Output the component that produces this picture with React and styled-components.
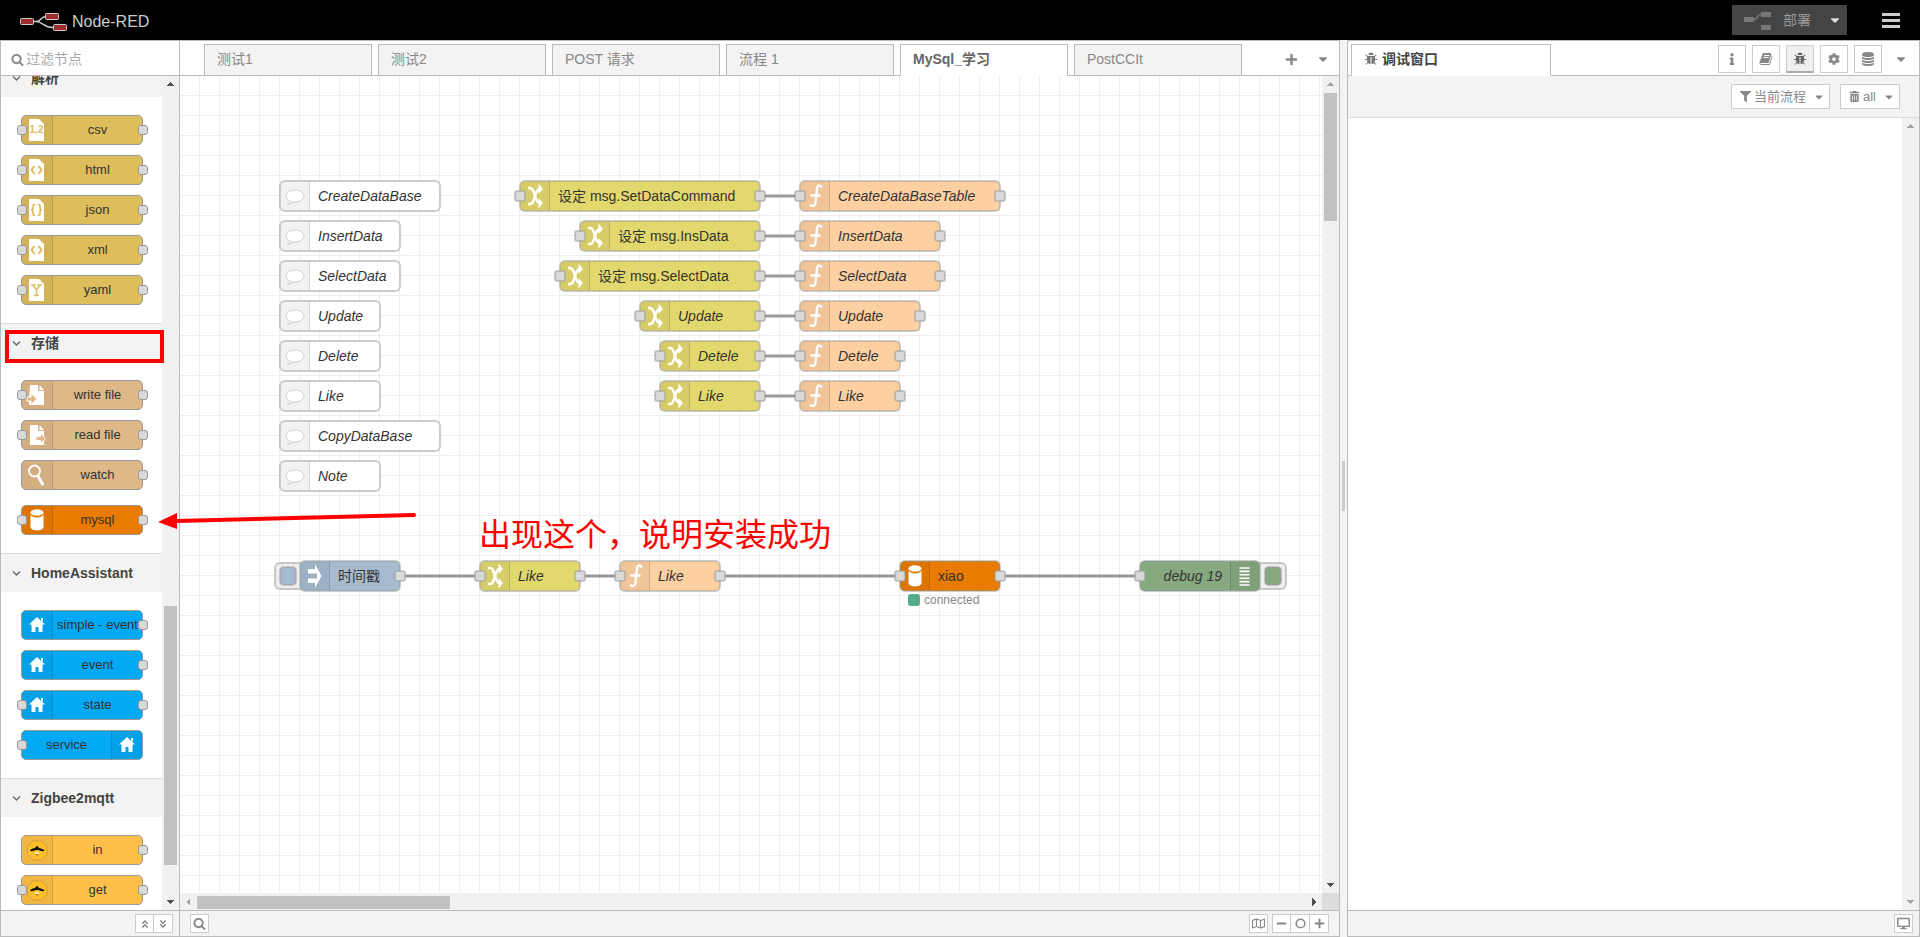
import React from "react";
import styled, { createGlobalStyle, css } from "styled-components";
import {
  FaInfo, FaCog, FaFilter, FaTrashAlt, FaRegMap, FaMinus, FaPlus, FaDesktop,
  FaCaretDown, FaAngleDoubleUp, FaAngleDoubleDown,
} from "react-icons/fa";

const Global = createGlobalStyle`
  *, *::before, *::after { box-sizing: border-box; }
  body {
    margin: 0;
    background: #f3f3f3;
    color: #333;
    font-family: "Liberation Sans", "Noto Sans CJK SC", sans-serif;
    font-size: 14px;
    line-height: 20px;
  }
  button, input { font: inherit; }
`;

/* ---------- icons ---------- */

const fa4 = {
  search: "M1216 832q0-185-131.5-316.5t-316.5-131.5-316.5 131.5-131.5 316.5 131.5 316.5 316.5 131.5 316.5-131.5 131.5-316.5zm512 832q0 52-38 90t-90 38q-54 0-90-38l-343-342q-179 124-399 124-143 0-273.5-55.5t-225-150-150-225-55.5-273.5 55.5-273.5 150-225 225-150 273.5-55.5 273.5 55.5 225 150 150 225 55.5 273.5q0 220-124 399l343 343q37 37 37 90z",
  database: "M896 768q237 0 443-43t325-127v170q0 69-103 128t-280 93.5-385 34.5-385-34.5-280-93.5-103-128v-170q119 84 325 127t443 43zm0 768q237 0 443-43t325-127v170q0 69-103 128t-280 93.5-385 34.5-385-34.5-280-93.5-103-128v-170q119 84 325 127t443 43zm0-384q237 0 443-43t325-127v170q0 69-103 128t-280 93.5-385 34.5-385-34.5-280-93.5-103-128v-170q119 84 325 127t443 43zm0-1152q208 0 385 34.5t280 93.5 103 128v128q0 69-103 128t-280 93.5-385 34.5-385-34.5-280-93.5-103-128v-128q0-69 103-128t280-93.5 385-34.5z",
  bug: "M1696 960q0 26-19 45t-45 19h-224q0 171-67 290l208 209q19 19 19 45t-19 45q-18 19-45 19t-45-19l-198-197q-5 5-15 13t-42 28.5-65 36.5-82 29-97 13v-896h-128v896q-51 0-101.5-13.5t-87-33-66-39-43.5-32.5l-15-14-183 207q-20 21-48 21-24 0-43-16-19-18-20.5-44.5t15.5-46.5l202-227q-58-114-58-274h-224q-26 0-45-19t-19-45 19-45 45-19h224v-294l-173-173q-19-19-19-45t19-45 45-19 45 19l173 173h844l173-173q19-19 45-19t45 19 19 45-19 45l-173 173v294h224q26 0 45 19t19 45zm-480-576h-640q0-133 93.5-226.5t226.5-93.5 226.5 93.5 93.5 226.5z",
  book: "M1703 478q40 57 18 129l-275 906q-19 64-76.5 107.5t-122.5 43.5h-923q-77 0-148.5-53.5t-99.5-131.5q-24-67-2-127 0-4 3-27t4-37q1-8-3-21.5t-3-19.5q2-11 8-21t16.5-23.5 16.5-23.5q23-38 45-91.5t30-91.5q3-10 .5-30t-.5-28q3-11 17-28t17-23q21-36 42-92t25-90q1-9-2.5-32t.5-28q4-13 22-30.5t22-22.5q19-26 42.5-84.5t27.5-96.5q1-8-3-25.5t-2-26.5q2-8 9-18t18-23 17-21q8-12 16.5-30.5t15-35 16-36 19.5-32 26.5-23.5 36-11.5 47.5 5.5l-1 3q38-9 51-9h761q74 0 114 56t18 130l-274 906q-36 119-71.5 153.5t-128.5 34.5h-869q-27 0-38 15-11 16-1 43 24 70 144 70h923q29 0 56-15.5t35-41.5l300-987q7-22 5-57 38 15 59 43zm-1064 2q-4 13 2 22.5t20 9.5h608q13 0 25.5-9.5t16.5-22.5l21-64q4-13-2-22.5t-20-9.5h-608q-13 0-25.5 9.5t-16.5 22.5zm-83 256q-4 13 2 22.5t20 9.5h608q13 0 25.5-9.5t16.5-22.5l21-64q4-13-2-22.5t-20-9.5h-608q-13 0-25.5 9.5t-16.5 22.5z",
};

const Glyph = ({ name, size = 14 }) => (
  <svg width={size} height={size} viewBox="0 0 1792 1792" fill="currentColor" aria-hidden="true">
    <path d={fa4[name]} />
  </svg>
);

const Chevron = () => (
  <svg width="14" height="14" viewBox="0 0 14 14" aria-hidden="true">
    <path d="M4 5.500l3.500 3.500L11 5.500" fill="none" stroke="#666" strokeWidth="1.300" />
  </svg>
);

const filePath = "M7 3h10l5 5v17H7z";

const nodeIcons = {
  csv: (c) => (
    <>
      <path d={filePath} fill="#fff" />
      <text x="14.5" y="17" fontSize="10" fontWeight="bold" textAnchor="middle" fill={c}>1,2</text>
    </>
  ),
  html: (c) => (
    <>
      <path d={filePath} fill="#fff" />
      <path d="M12.500 10l-3 4 3 4M16.500 10l3 4-3 4" fill="none" stroke={c} strokeWidth="2" />
    </>
  ),
  json: (c) => (
    <>
      <path d={filePath} fill="#fff" />
      <path d="M13.500 8.500h-1q-1.500 0-1.500 1.500v2q0 2-2 2q2 0 2 2v2q0 1.500 1.500 1.500h1M15.500 8.500h1q1.500 0 1.500 1.500v2q0 2 2 2q-2 0-2 2v2q0 1.500-1.500 1.500h-1" fill="none" stroke={c} strokeWidth="1.700" />
    </>
  ),
  yaml: (c) => (
    <>
      <path d={filePath} fill="#fff" />
      <path d="M9 9h4.500M15.500 9H20M11 9l3.500 5L18 9M14.500 14v5.500M12 19.500h5" fill="none" stroke={c} strokeWidth="1.500" />
    </>
  ),
  write: (c) => (
    <>
      <path d="M8 4h8v6h6v14H7v-4z" fill="#fff" />
      <path d="M17.500 4l4.500 5h-4.500z" fill="#fff" />
      <path d="M5 16h4v-3.500l6 5.500-6 5.500V20H5z" fill={c} stroke="#fff" strokeWidth="1" />
    </>
  ),
  read: (c) => (
    <>
      <path d="M8 4h8v6h6v14H8z" fill="#fff" />
      <path d="M17.500 4l4.500 5h-4.500z" fill="#fff" />
      <path d="M14 15.500h4.500V12l5 5.500-5 5.500v-3.500H14z" fill={c} stroke="#fff" strokeWidth="1" />
    </>
  ),
  watch: () => (
    <>
      <circle cx="12.500" cy="10" r="5.500" fill="none" stroke="#fff" strokeWidth="1.800" />
      <path d="M16 15l4.500 8" stroke="#fff" strokeWidth="3" strokeLinecap="round" />
    </>
  ),
  db: (c) => (
    <>
      <path d="M8.500 7.500v14.500c0 4.500 13 4.500 13 0V7.500z" fill="#fff" />
      <ellipse cx="15" cy="8.500" rx="7" ry="4" fill={c} />
      <ellipse cx="15" cy="7.500" rx="6.500" ry="3.200" fill="#fff" />
    </>
  ),
  home: () => (
    <path d="M15 6l8 7.500h-2.500V21h-4v-5h-3v5h-4v-7.500H7z M19 7h2v4l-2-2z" fill="#fff" />
  ),
  bee: () => (
    <>
      <path d="M11 5h8.500l5.500 5.500v8L19.500 24H11l-5.500-5.500v-8z" fill="#ffbf2b" stroke="#cf9d3c" strokeWidth="1" />
      <path d="M8 15q0-2 5-3l1.500-2h1l1.500 2q5 1 5.500 3-4 .5-6-1h-2.500q-3 1.500-6 1z" fill="#111" />
      <path d="M13 16h4l-.5 2h-3z" fill="#fff3c0" />
      <path d="M13.500 18h3L15 20.500z" fill="#a87d20" />
    </>
  ),
  change: () => (
    <>
      <path d="M8 7h2.500c4.500 0 4 15 9 15M8 23h2.500c4.500 0 4-15 9-15" fill="none" stroke="#fff" strokeWidth="2.600" />
      <path d="M18.500 2.500l4.500 5.500-4.500 5zM18.500 17l4.500 5-4.500 5.500z" fill="#fff" />
    </>
  ),
  fn: () => (
    <path d="M22 6.500c-1.500-3-4.500-3-5 1L15.500 21.500c-.5 4-3.500 4.500-5.500 2M10.500 14.500h10" fill="none" stroke="#fff" strokeWidth="2.300" />
  ),
  inject: () => (
    <path d="M8 8h7V3l6.500 12L15 27v-5H8v-4.500h9v-5H8z" fill="#fff" />
  ),
  debug: () => (
    <path d="M9.500 7h10M9.500 10.400h10M9.500 13.800h10M9.500 17.200h10M9.500 20.600h10M9.500 24h10" stroke="#fff" strokeWidth="1.600" />
  ),
  comment: () => (
    <path d="M11 20.500c-2.500-1-5-2.500-5-5.500 0-8 18-8 18 0 0 4-5 6.500-11 6-1.500 1-3.500 2.500-5.500 3 1.500-1 3-2 3.500-3.500z" fill="#fff" stroke="#ccc" strokeWidth="1" />
  ),
};

/* ---------- header ---------- */

const Page = styled.div`
  position: relative;
  display: flex;
  flex-direction: column;
  height: 100vh;
  min-width: 1100px;
  overflow: hidden;
`;

const Header = styled.header`
  display: flex;
  align-items: center;
  flex: none;
  height: 40px;
  padding: 0 20px;
  background: #000;
`;

const Brand = styled.h1`
  display: flex;
  align-items: center;
  gap: 4px;
  margin: 0 auto 0 0;
  padding-top: 3px;
  color: #ccc;
  font-size: 16px;
  font-weight: normal;
`;

const Deploy = styled.div`
  display: flex;
  height: 30px;
  margin: 0 35px 0 0;
  background: #444;
`;

const DeployButton = styled.button`
  display: flex;
  align-items: center;
  gap: 12px;
  padding: 0 9px 0 12px;
  border: 0;
  background: none;
  color: #999;
`;

const DeployCaret = styled.button`
  display: flex;
  align-items: center;
  justify-content: center;
  width: 27px;
  padding: 0 0 0 2px;
  border: 0;
  background: none;
  color: #ddd;
`;

const MenuButton = styled.button`
  display: flex;
  flex-direction: column;
  gap: 3px;
  width: 18px;
  padding: 0;
  border: 0;
  background: none;
`;

const MenuBar = styled.span`
  height: 3px;
  background: #ccc;
`;

/* ---------- shared panel parts ---------- */

const Main = styled.main`
  display: flex;
  flex: 1;
  min-height: 0;
`;

const Panel = styled.section`
  display: flex;
  flex-direction: column;
  min-width: 0;
  border: 1px solid #bbb;
  background: #fff;
`;

const Palette = styled(Panel)`
  flex: none;
  width: 180px;
`;

const Workspace = styled(Panel)`
  flex: 1;
  border-left: 0;
`;

const Sidebar = styled(Panel)`
  flex: none;
  width: 573px;
`;

const Separator = styled.div`
  display: flex;
  align-items: center;
  justify-content: center;
  flex: none;
  width: 7px;
  padding-bottom: 6px;
`;

const Grip = styled.span`
  width: 3px;
  height: 50px;
  background: #ccc;
`;

const Body = styled.div`
  display: flex;
  flex: 1;
  min-height: 0;
`;

const Footer = styled.footer`
  display: flex;
  align-items: center;
  justify-content: ${(p) => p.$align || "flex-end"};
  flex: none;
  height: 26px;
  padding: ${(p) => p.$pad};
  border-top: 1px solid #bbb;
  background: #f3f3f3;
`;

const FooterGroup = styled.div`
  display: flex;
  margin-left: ${(p) => p.$gap || 0}px;
`;

const FooterButton = styled.button`
  display: flex;
  align-items: center;
  justify-content: center;
  width: 19px;
  height: 19px;
  padding: 0;
  border: 1px solid #ccc;
  background: #fff;
  color: #888;
  & + & { border-left: 0; }
`;

const Bar = styled.div`
  display: flex;
  flex: none;
  flex-direction: ${(p) => (p.$across ? "row" : "column")};
  ${(p) => (p.$across ? "height" : "width")}: 17px;
  background: #f1f1f1;
`;

const BarArrow = styled.span`
  display: flex;
  align-items: center;
  justify-content: center;
  flex: none;
  width: 17px;
  height: 17px;
  color: ${(p) => (p.$off ? "#a3a3a3" : "#505050")};
`;

const Room = styled.span`
  flex: ${(p) => p.$size} 0 0;
`;

const Thumb = styled.span`
  flex: ${(p) => p.$size} 0 0;
  margin: ${(p) => (p.$across ? "3px 0 1px" : "0 2px")};
  background: #c1c1c1;
`;

const Corner = styled.span`
  flex: none;
  width: 17px;
  height: 17px;
  background: #dcdcdc;
`;

const arrows = {
  up: "M0 6l4-4 4 4z",
  down: "M0 3l4 4 4-4z",
  left: "M6 1L2 5l4 4z",
  right: "M3 1l4 4-4 4z",
};

const Arrow = ({ dir, off }) => (
  <BarArrow $off={off}>
    <svg width="9" height="9" viewBox="0 0 9 9" fill="currentColor" shapeRendering="crispEdges"><path d={arrows[dir]} /></svg>
  </BarArrow>
);

const ScrollBar = ({ across, parts, startOff, endOff }) => (
  <Bar $across={across}>
    <Arrow dir={across ? "left" : "up"} off={startOff} />
    <Room $size={parts[0]} />
    {parts[1] > 0 && <Thumb $size={parts[1]} $across={across} />}
    <Room $size={parts[2]} />
    <Arrow dir={across ? "right" : "down"} off={endOff} />
  </Bar>
);

/* ---------- palette ---------- */

const Search = styled.label`
  display: flex;
  align-items: center;
  gap: 2px;
  flex: none;
  height: 35px;
  padding: 2px 10px 0;
  border-bottom: 1px solid #bbb;
  color: #888;
`;

const SearchInput = styled.input`
  flex: 1;
  min-width: 0;
  padding: 0;
  border: 0;
  outline: 0;
  background: none;
  color: #333;
  &::placeholder { color: #aaa; opacity: 1; }
`;

const Categories = styled.div`
  flex: 1;
  min-width: 0;
  overflow: hidden;
`;

const CategoryList = styled.div`
  margin-top: -18px;
`;

const CategoryHeader = styled.h2`
  display: flex;
  align-items: center;
  gap: 8px;
  height: 39px;
  margin: 0;
  padding: 0 8px;
  border-top: 1px solid #ddd;
  background: #f3f3f3;
  font-size: 14px;
  color: #444;
`;

const CategoryNodes = styled.div`
  display: flex;
  flex-direction: column;
  gap: 10px;
  padding: 18px 19px 18px 20px;
`;

const PaletteNode = styled.div`
  position: relative;
  display: flex;
  flex-direction: ${(p) => (p.$flip ? "row-reverse" : "row")};
  height: 30px;
  margin-top: ${(p) => (p.$spaced ? 5 : 0)}px;
  border: 1px solid #999;
  border-radius: 5px;
  background: ${(p) => p.$color};
  font-size: 13px;
`;

const IconCell = styled.span`
  flex: none;
  width: ${(p) => p.$w || 31}px;
  border: 0 solid rgba(0, 0, 0, 0.12);
  border-${(p) => (p.$flip ? "left" : "right")}-width: 1px;
  border-radius: ${(p) => (p.$flip ? "0 4px 4px 0" : "4px 0 0 4px")};
  background: rgba(0, 0, 0, 0.05);
  overflow: hidden;
`;

const PaletteLabel = styled.span`
  flex: 1;
  line-height: 28px;
  text-align: center;
  white-space: nowrap;
`;

const PalettePort = styled.span`
  position: absolute;
  top: 9px;
  ${(p) => (p.$side === "left" ? "left: -5px" : "right: -6px")};
  width: 10px;
  height: 10px;
  border: 1px solid #999;
  border-radius: 3px;
  background: #d9d9d9;
`;

const gold = "#DEBD5C";
const tan = "#DEB887";
const orange = "#E97B00";
const blue = "#03A9F4";
const amber = "#FFC049";

const categories = [
  { name: "解析", nodes: [
    { label: "csv", icon: "csv", color: gold, in: 1, out: 1 },
    { label: "html", icon: "html", color: gold, in: 1, out: 1 },
    { label: "json", icon: "json", color: gold, in: 1, out: 1 },
    { label: "xml", icon: "html", color: gold, in: 1, out: 1 },
    { label: "yaml", icon: "yaml", color: gold, in: 1, out: 1 },
  ] },
  { name: "存储", nodes: [
    { label: "write file", icon: "write", color: tan, in: 1, out: 1 },
    { label: "read file", icon: "read", color: tan, in: 1, out: 1 },
    { label: "watch", icon: "watch", color: tan, out: 1 },
    { label: "mysql", icon: "db", color: orange, in: 1, out: 1, spaced: true },
  ] },
  { name: "HomeAssistant", nodes: [
    { label: "simple - event", icon: "home", color: blue, out: 1 },
    { label: "event", icon: "home", color: blue, out: 1 },
    { label: "state", icon: "home", color: blue, in: 1, out: 1 },
    { label: "service", icon: "home", color: blue, in: 1, flip: true },
  ] },
  { name: "Zigbee2mqtt", nodes: [
    { label: "in", icon: "bee", color: amber, out: 1 },
    { label: "get", icon: "bee", color: amber, in: 1, out: 1 },
  ] },
];

/* ---------- tabs ---------- */

const TabBar = styled.div`
  display: flex;
  align-items: flex-end;
  gap: ${(p) => p.$gap || 0}px;
  flex: none;
  height: 35px;
  padding: ${(p) => p.$pad};
  box-shadow: inset 0 -1px #bbb;
`;

const Tab = styled.a`
  display: flex;
  align-items: center;
  gap: 4px;
  flex: 0 1 ${(p) => p.$w || 168}px;
  min-width: 0;
  height: 32px;
  padding: 0 12px 2px;
  border: 1px solid #bbb;
  border-bottom-color: ${(p) => (p.$active ? "#fff" : "#bbb")};
  background: ${(p) => (p.$active ? "#fff" : "#f3f3f3")};
  color: ${(p) => p.$tone || (p.$active ? "#666" : "#888")};
  font-weight: ${(p) => (p.$active ? "bold" : "normal")};
  text-decoration: none;
  white-space: nowrap;
  svg { color: #777; }
`;

const TabTools = styled.div`
  display: flex;
  align-items: center;
  gap: 6px;
  height: 34px;
  margin-left: auto;
`;

const PlainButton = styled.button`
  display: flex;
  align-items: center;
  justify-content: center;
  width: 26px;
  height: 28px;
  padding: 0;
  border: 0;
  background: none;
  color: #888;
`;

const SideButton = styled.button`
  display: flex;
  align-items: center;
  justify-content: center;
  width: 28px;
  height: 28px;
  padding: 0;
  border: 1px solid #ccc;
  background: #fff;
  color: #888;
  ${(p) => p.$on && css`
    border-bottom: 2px solid #aaa;
    background: #efefef;
    color: #666;
  `}
`;

/* ---------- canvas ---------- */

const CanvasColumn = styled.div`
  display: flex;
  flex-direction: column;
  flex: 1;
  min-width: 0;
`;

const Canvas = styled.div`
  position: relative;
  flex: 1;
  overflow: hidden;
  background-color: #fff;
  background-image:
    linear-gradient(to right, transparent 19px, #eee 19px),
    linear-gradient(to bottom, transparent 19px, #eee 19px);
  background-size: 20px 20px;
`;

const Wires = styled.svg`
  position: absolute;
  inset: 0;
  width: 100%;
  height: 100%;
`;

const softEdge = css`
  border: 1px solid rgba(153, 153, 153, 0.5);
  box-shadow: 0 0 0 1px rgba(153, 153, 153, 0.5);
`;

const FlowNode = styled.div`
  position: absolute;
  left: ${(p) => p.$x}px;
  top: ${(p) => p.$y}px;
  width: ${(p) => p.$w}px;
  height: 30px;
`;

const FlowBody = styled.div`
  ${softEdge}
  position: relative;
  display: flex;
  flex-direction: ${(p) => (p.$flip ? "row-reverse" : "row")};
  height: 30px;
  border-radius: 5px;
  background: ${(p) => p.$color};
`;

const FlowLabel = styled.span`
  flex: 1;
  padding: 0 8px;
  line-height: 28px;
  font-style: ${(p) => (p.$plain ? "normal" : "italic")};
  text-align: ${(p) => (p.$flip ? "right" : "left")};
  white-space: nowrap;
`;

const FlowPort = styled.span`
  ${softEdge}
  position: absolute;
  top: 10px;
  ${(p) => p.$side}: -5px;
  width: 10px;
  height: 10px;
  border-radius: 2px;
  background: #d9d9d9;
`;

const NodeButton = styled.button`
  ${softEdge}
  position: absolute;
  top: 2px;
  ${(p) => (p.$side === "left" ? "left: -25px" : "right: -26px")};
  display: flex;
  align-items: center;
  justify-content: ${(p) => (p.$side === "left" ? "flex-start" : "flex-end")};
  width: 32px;
  height: 26px;
  padding: 0 4px;
  border-radius: 5px;
  background: #eee;
`;

const ButtonFace = styled.span`
  ${softEdge}
  width: 16px;
  height: 18px;
  border-radius: 4px;
  background: ${(p) => p.$color};
`;

const Status = styled.span`
  position: absolute;
  top: 33px;
  left: 8px;
  display: flex;
  align-items: center;
  gap: 4px;
  color: #888;
  font-size: 12px;
  line-height: 12px;
`;

const StatusDot = styled.span`
  width: 12px;
  height: 12px;
  border-radius: 3px;
  background: #5a8;
`;

const yellow = "#E2D96E";
const peach = "#FDD0A2";
const slate = "#A6BBCF";
const green = "#87A980";

const comments = [
  ["CreateDataBase", 160], ["InsertData", 120], ["SelectData", 120], ["Update", 100],
  ["Delete", 100], ["Like", 100], ["CopyDataBase", 160], ["Note", 100],
].map(([label, w], i) => ({ label, w, x: 100, y: 105 + 40 * i, icon: "comment", color: "#fff" }));

const pairs = [
  ["设定 msg.SetDataCommand", 240, "CreateDataBaseTable", 200, true],
  ["设定 msg.InsData", 180, "InsertData", 140, true],
  ["设定 msg.SelectData", 200, "SelectData", 140, true],
  ["Update", 120, "Update", 120],
  ["Detele", 100, "Detele", 100],
  ["Like", 100, "Like", 100],
].flatMap(([a, aw, b, bw, plain], i) => [
  { label: a, w: aw, x: 580 - aw, y: 105 + 40 * i, icon: "change", color: yellow, plain, in: 1, out: 1 },
  { label: b, w: bw, x: 620, y: 105 + 40 * i, icon: "fn", color: peach, in: 1, out: 1 },
]);

const chain = [
  { label: "时间戳", w: 100, x: 120, y: 485, icon: "inject", color: slate, plain: true, button: "left", out: 1 },
  { label: "Like", w: 100, x: 300, y: 485, icon: "change", color: yellow, in: 1, out: 1 },
  { label: "Like", w: 100, x: 440, y: 485, icon: "fn", color: peach, in: 1, out: 1 },
  { label: "xiao", w: 100, x: 720, y: 485, icon: "db", color: orange, plain: true, in: 1, out: 1, status: "connected" },
  { label: "debug 19", w: 120, x: 960, y: 485, icon: "debug", color: green, flip: true, button: "right", in: 1 },
];

const wires = [
  ...[0, 1, 2, 3, 4, 5].map((i) => [580, 620, 120 + 40 * i]),
  [220, 300, 500], [400, 440, 500], [540, 720, 500], [820, 960, 500],
];

const CanvasNode = ({ n }) => (
  <FlowNode $x={n.x} $y={n.y} $w={n.w}>
    {n.button && (
      <NodeButton $side={n.button} aria-label={n.label}><ButtonFace $color={n.color} /></NodeButton>
    )}
    <FlowBody $color={n.color} $flip={n.flip}>
      <IconCell $flip={n.flip} $w={29}>
        <svg width="29" height="28" viewBox="1 1 29 28" aria-hidden="true">{nodeIcons[n.icon](n.color)}</svg>
      </IconCell>
      <FlowLabel $plain={n.plain} $flip={n.flip}>{n.label}</FlowLabel>
    </FlowBody>
    {n.in && <FlowPort $side="left" />}
    {n.out && <FlowPort $side="right" />}
    {n.status && <Status><StatusDot />{n.status}</Status>}
  </FlowNode>
);

/* ---------- debug sidebar ---------- */

const DebugToolbar = styled.div`
  display: flex;
  align-items: center;
  justify-content: flex-end;
  gap: 10px;
  flex: none;
  height: 42px;
  padding: 0 19px 0 0;
  border-bottom: 1px solid #ddd;
  background: #f3f3f3;
`;

const ToolButton = styled.button`
  display: flex;
  align-items: center;
  gap: 3px;
  height: 25px;
  padding: 0 4px 0 8px;
  border: 1px solid #ccc;
  background: #fff;
  color: #888;
  font-size: 13px;
  line-height: 20px;
  svg:last-child { margin-left: 4px; }
`;

const Messages = styled.div`
  flex: 1;
`;

/* ---------- annotations ---------- */

const Frame = styled.div`
  position: absolute;
  left: 5px;
  top: 330px;
  width: 159px;
  height: 33px;
  border: 4px solid #f00;
`;

const Pointer = styled.svg`
  position: absolute;
  left: 156px;
  top: 508px;
`;

const Note = styled.p`
  position: absolute;
  left: 479px;
  top: 512px;
  margin: 0;
  color: #f00;
  font-family: "Noto Sans CJK SC", sans-serif;
  font-size: 32px;
  line-height: 40px;
  white-space: nowrap;
`;

const ScrollColumn = styled.div`
  display: flex;
  flex-direction: column;
  & > :first-child { flex: 1; }
`;

export default function App() {
  return (
    <Page>
      <Global />
      <Header>
        <Brand>
          <svg width="48" height="20" viewBox="0 0 48 20" aria-hidden="true">
            <path d="M14 9.500h2c6 0 4-5 10-5M14 9.500h2c7 0 7 6 17 6" fill="none" stroke="#ccc" strokeWidth="1.500" />
            <g fill="#9c2c2e" stroke="#ccc">
              <rect x="0.500" y="6.500" width="13" height="6" rx="1" />
              <rect x="25.500" y="1.500" width="13" height="6" rx="1" />
              <rect x="33.500" y="12.500" width="13" height="6" rx="1" />
            </g>
          </svg>
          <span>Node-RED</span>
        </Brand>
        <Deploy>
          <DeployButton>
            <svg width="27" height="20" viewBox="0 0 27 20" aria-hidden="true">
              <path d="M0 7h10v5H0zM17 2h10v5H17zM17 15h10v5H17z" fill="#777" />
              <path d="M10 9.500c4 0 3-5 7-5" fill="none" stroke="#777" strokeWidth="1.500" />
            </svg>
            部署
          </DeployButton>
          <DeployCaret aria-label="部署选项"><FaCaretDown size={14} /></DeployCaret>
        </Deploy>
        <MenuButton aria-label="菜单"><MenuBar /><MenuBar /><MenuBar /></MenuButton>
      </Header>

      <Main>
        <Palette>
          <Search>
            <Glyph name="search" size={13} />
            <SearchInput type="text" placeholder="过滤节点" aria-label="过滤节点" />
          </Search>
          <Body>
            <Categories>
              <CategoryList>
                {categories.map((c) => (
                  <React.Fragment key={c.name}>
                    <CategoryHeader><Chevron />{c.name}</CategoryHeader>
                    <CategoryNodes>
                      {c.nodes.map((n) => (
                        <PaletteNode key={n.label} $color={n.color} $flip={n.flip} $spaced={n.spaced}>
                          <IconCell $flip={n.flip}>
                            <svg width="30" height="28" viewBox={`0 ${n.icon === "db" ? 1 : 0} 30 28`} aria-hidden="true">
                              {nodeIcons[n.icon](n.color)}
                            </svg>
                          </IconCell>
                          <PaletteLabel>{n.label}</PaletteLabel>
                          {n.in && <PalettePort $side="left" />}
                          {n.out && <PalettePort $side="right" />}
                        </PaletteNode>
                      ))}
                    </CategoryNodes>
                  </React.Fragment>
                ))}
              </CategoryList>
            </Categories>
            <ScrollBar parts={[513, 259, 28]} />
          </Body>
          <Footer $pad="0 6px 0 0">
            <FooterButton aria-label="折叠"><FaAngleDoubleUp size={10} /></FooterButton>
            <FooterButton aria-label="展开"><FaAngleDoubleDown size={10} /></FooterButton>
          </Footer>
        </Palette>

        <Workspace>
          <TabBar $gap={6} $pad="0 3px 0 24px">
            <Tab href="#">测试1</Tab>
            <Tab href="#">测试2</Tab>
            <Tab href="#">POST 请求</Tab>
            <Tab href="#">流程 1</Tab>
            <Tab href="#" $active>MySql_学习</Tab>
            <Tab href="#">PostCCIt</Tab>
            <TabTools>
              <PlainButton aria-label="添加"><FaPlus size={13} /></PlainButton>
              <PlainButton aria-label="流程列表"><FaCaretDown size={14} /></PlainButton>
            </TabTools>
          </TabBar>
          <Body>
            <CanvasColumn>
              <Canvas>
                <Wires aria-hidden="true">
                  {wires.map(([x1, x2, y]) => (
                    <line key={`${x1}-${y}`} x1={x1} x2={x2} y1={y} y2={y} stroke="#999" strokeWidth="3" />
                  ))}
                </Wires>
                {[...comments, ...pairs, ...chain].map((n) => (
                  <CanvasNode key={`${n.x}-${n.y}`} n={n} />
                ))}
              </Canvas>
              <ScrollBar across startOff parts={[0, 253, 855]} />
            </CanvasColumn>
            <ScrollColumn>
              <ScrollBar startOff parts={[0, 128, 655]} />
              <Corner />
            </ScrollColumn>
          </Body>
          <Footer $align="flex-start" $pad="0 10px">
            <FooterButton aria-label="搜索"><Glyph name="search" size={13} /></FooterButton>
            <Room $size={1} />
            <FooterButton aria-label="导航图"><FaRegMap size={13} /></FooterButton>
            <FooterGroup $gap={4}>
              <FooterButton aria-label="缩小"><FaMinus size={11} /></FooterButton>
              <FooterButton aria-label="重置缩放">
                <svg width="11" height="11" viewBox="0 0 11 11" aria-hidden="true"><circle cx="5.500" cy="5.500" r="4.300" fill="none" stroke="#888" strokeWidth="1.600" /></svg>
              </FooterButton>
              <FooterButton aria-label="放大"><FaPlus size={11} /></FooterButton>
            </FooterGroup>
          </Footer>
        </Workspace>

        <Separator><Grip /></Separator>

        <Sidebar>
          <TabBar $pad="0 5px 0 3px">
            <Tab href="#" $active $w={200} $tone="#444"><Glyph name="bug" />调试窗口</Tab>
            <TabTools>
              <SideButton aria-label="信息"><FaInfo size={12} /></SideButton>
              <SideButton aria-label="帮助"><Glyph name="book" /></SideButton>
              <SideButton $on aria-label="调试"><Glyph name="bug" /></SideButton>
              <SideButton aria-label="配置节点"><FaCog size={12} /></SideButton>
              <SideButton aria-label="上下文数据"><Glyph name="database" /></SideButton>
              <PlainButton aria-label="更多"><FaCaretDown size={14} /></PlainButton>
            </TabTools>
          </TabBar>
          <DebugToolbar>
            <ToolButton><FaFilter size={11} />当前流程<FaCaretDown size={12} /></ToolButton>
            <ToolButton><FaTrashAlt size={11} />all<FaCaretDown size={12} /></ToolButton>
          </DebugToolbar>
          <Body>
            <Messages />
            <ScrollBar startOff endOff parts={[1, 0, 0]} />
          </Body>
          <Footer $pad="0 6px">
            <FooterButton aria-label="弹出窗口"><FaDesktop size={13} /></FooterButton>
          </Footer>
        </Sidebar>
      </Main>

      <Frame />
      <Pointer width="264" height="24" viewBox="0 0 264 24" aria-hidden="true">
        <path d="M20 13L258 7" stroke="#f00" strokeWidth="4" strokeLinecap="round" />
        <path d="M2 14L21 5v16z" fill="#f00" />
      </Pointer>
      <Note>出现这个，说明安装成功</Note>
    </Page>
  );
}
